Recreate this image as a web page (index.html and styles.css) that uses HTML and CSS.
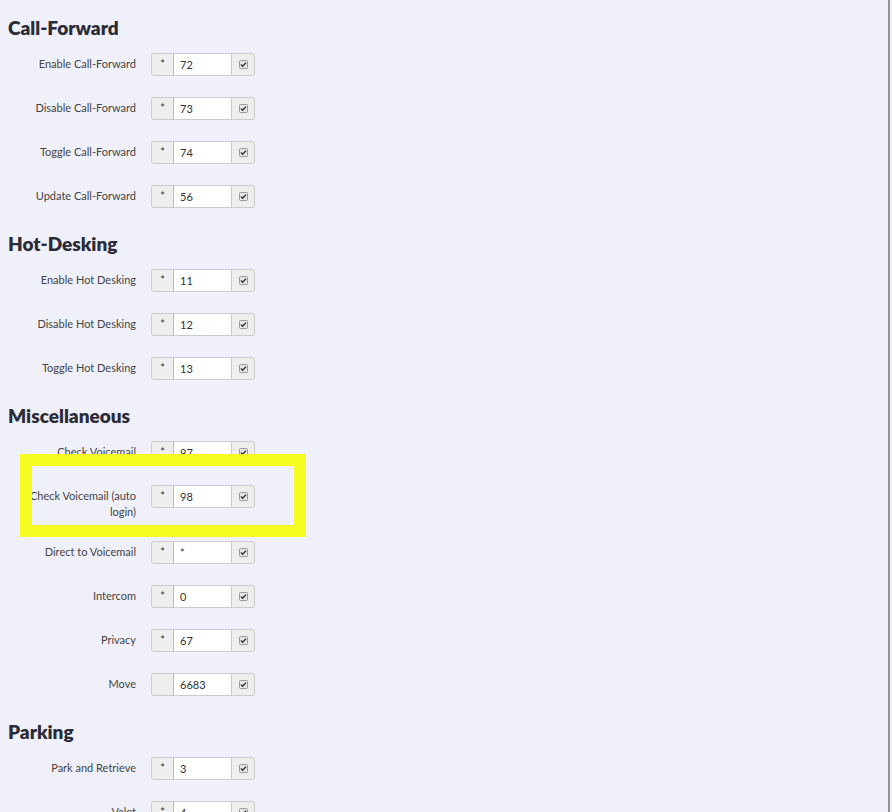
FILE: index.html
```html
<!DOCTYPE html>
<html lang="en">
<head>
    <meta charset="UTF-8">
    <meta name="viewport" content="width=device-width, initial-scale=1.0">
    <title>Feature Codes</title>
    <link rel="stylesheet" href="styles.css">
</head>
<body>

    <div class="page">
        <h2>Call-Forward</h2>
        <div class="row">
            <label>Enable Call-Forward</label>
            <div class="code-group"><span class="prefix">*</span><input type="text" value="72"><span class="check"><svg width="9" height="9" viewBox="0 0 9 9"><rect x="0.5" y="0.5" width="8" height="8" rx="1" fill="#e6e6e6" stroke="#9a9a9a"/><path d="M2 4.6 L3.7 6.3 L7 2.6" fill="none" stroke="#333" stroke-width="1.4"/></svg></span></div>
        </div>
        <div class="row">
            <label>Disable Call-Forward</label>
            <div class="code-group"><span class="prefix">*</span><input type="text" value="73"><span class="check"><svg width="9" height="9" viewBox="0 0 9 9"><rect x="0.5" y="0.5" width="8" height="8" rx="1" fill="#e6e6e6" stroke="#9a9a9a"/><path d="M2 4.6 L3.7 6.3 L7 2.6" fill="none" stroke="#333" stroke-width="1.4"/></svg></span></div>
        </div>
        <div class="row">
            <label>Toggle Call-Forward</label>
            <div class="code-group"><span class="prefix">*</span><input type="text" value="74"><span class="check"><svg width="9" height="9" viewBox="0 0 9 9"><rect x="0.5" y="0.5" width="8" height="8" rx="1" fill="#e6e6e6" stroke="#9a9a9a"/><path d="M2 4.6 L3.7 6.3 L7 2.6" fill="none" stroke="#333" stroke-width="1.4"/></svg></span></div>
        </div>
        <div class="row">
            <label>Update Call-Forward</label>
            <div class="code-group"><span class="prefix">*</span><input type="text" value="56"><span class="check"><svg width="9" height="9" viewBox="0 0 9 9"><rect x="0.5" y="0.5" width="8" height="8" rx="1" fill="#e6e6e6" stroke="#9a9a9a"/><path d="M2 4.6 L3.7 6.3 L7 2.6" fill="none" stroke="#333" stroke-width="1.4"/></svg></span></div>
        </div>

        <h2>Hot-Desking</h2>
        <div class="row">
            <label>Enable Hot Desking</label>
            <div class="code-group"><span class="prefix">*</span><input type="text" value="11"><span class="check"><svg width="9" height="9" viewBox="0 0 9 9"><rect x="0.5" y="0.5" width="8" height="8" rx="1" fill="#e6e6e6" stroke="#9a9a9a"/><path d="M2 4.6 L3.7 6.3 L7 2.6" fill="none" stroke="#333" stroke-width="1.4"/></svg></span></div>
        </div>
        <div class="row">
            <label>Disable Hot Desking</label>
            <div class="code-group"><span class="prefix">*</span><input type="text" value="12"><span class="check"><svg width="9" height="9" viewBox="0 0 9 9"><rect x="0.5" y="0.5" width="8" height="8" rx="1" fill="#e6e6e6" stroke="#9a9a9a"/><path d="M2 4.6 L3.7 6.3 L7 2.6" fill="none" stroke="#333" stroke-width="1.4"/></svg></span></div>
        </div>
        <div class="row">
            <label>Toggle Hot Desking</label>
            <div class="code-group"><span class="prefix">*</span><input type="text" value="13"><span class="check"><svg width="9" height="9" viewBox="0 0 9 9"><rect x="0.5" y="0.5" width="8" height="8" rx="1" fill="#e6e6e6" stroke="#9a9a9a"/><path d="M2 4.6 L3.7 6.3 L7 2.6" fill="none" stroke="#333" stroke-width="1.4"/></svg></span></div>
        </div>

        <h2>Miscellaneous</h2>
        <div class="row">
            <label>Check Voicemail</label>
            <div class="code-group"><span class="prefix">*</span><input type="text" value="97"><span class="check"><svg width="9" height="9" viewBox="0 0 9 9"><rect x="0.5" y="0.5" width="8" height="8" rx="1" fill="#e6e6e6" stroke="#9a9a9a"/><path d="M2 4.6 L3.7 6.3 L7 2.6" fill="none" stroke="#333" stroke-width="1.4"/></svg></span></div>
        </div>
        <div class="row">
            <label>Check Voicemail (auto login)</label>
            <div class="code-group"><span class="prefix">*</span><input type="text" value="98"><span class="check"><svg width="9" height="9" viewBox="0 0 9 9"><rect x="0.5" y="0.5" width="8" height="8" rx="1" fill="#e6e6e6" stroke="#9a9a9a"/><path d="M2 4.6 L3.7 6.3 L7 2.6" fill="none" stroke="#333" stroke-width="1.4"/></svg></span></div>
        </div>
        <div class="row">
            <label>Direct to Voicemail</label>
            <div class="code-group"><span class="prefix">*</span><input type="text" value="*"><span class="check"><svg width="9" height="9" viewBox="0 0 9 9"><rect x="0.5" y="0.5" width="8" height="8" rx="1" fill="#e6e6e6" stroke="#9a9a9a"/><path d="M2 4.6 L3.7 6.3 L7 2.6" fill="none" stroke="#333" stroke-width="1.4"/></svg></span></div>
        </div>
        <div class="row">
            <label>Intercom</label>
            <div class="code-group"><span class="prefix">*</span><input type="text" value="0"><span class="check"><svg width="9" height="9" viewBox="0 0 9 9"><rect x="0.5" y="0.5" width="8" height="8" rx="1" fill="#e6e6e6" stroke="#9a9a9a"/><path d="M2 4.6 L3.7 6.3 L7 2.6" fill="none" stroke="#333" stroke-width="1.4"/></svg></span></div>
        </div>
        <div class="row">
            <label>Privacy</label>
            <div class="code-group"><span class="prefix">*</span><input type="text" value="67"><span class="check"><svg width="9" height="9" viewBox="0 0 9 9"><rect x="0.5" y="0.5" width="8" height="8" rx="1" fill="#e6e6e6" stroke="#9a9a9a"/><path d="M2 4.6 L3.7 6.3 L7 2.6" fill="none" stroke="#333" stroke-width="1.4"/></svg></span></div>
        </div>
        <div class="row">
            <label>Move</label>
            <div class="code-group"><span class="prefix"></span><input type="text" value="6683"><span class="check"><svg width="9" height="9" viewBox="0 0 9 9"><rect x="0.5" y="0.5" width="8" height="8" rx="1" fill="#e6e6e6" stroke="#9a9a9a"/><path d="M2 4.6 L3.7 6.3 L7 2.6" fill="none" stroke="#333" stroke-width="1.4"/></svg></span></div>
        </div>

        <h2>Parking</h2>
        <div class="row">
            <label>Park and Retrieve</label>
            <div class="code-group"><span class="prefix">*</span><input type="text" value="3"><span class="check"><svg width="9" height="9" viewBox="0 0 9 9"><rect x="0.5" y="0.5" width="8" height="8" rx="1" fill="#e6e6e6" stroke="#9a9a9a"/><path d="M2 4.6 L3.7 6.3 L7 2.6" fill="none" stroke="#333" stroke-width="1.4"/></svg></span></div>
        </div>
        <div class="row">
            <label>Valet</label>
            <div class="code-group"><span class="prefix">*</span><input type="text" value="4"><span class="check"><svg width="9" height="9" viewBox="0 0 9 9"><rect x="0.5" y="0.5" width="8" height="8" rx="1" fill="#e6e6e6" stroke="#9a9a9a"/><path d="M2 4.6 L3.7 6.3 L7 2.6" fill="none" stroke="#333" stroke-width="1.4"/></svg></span></div>
        </div>

        <div class="highlight"></div>
    </div>

</body>
</html>
```

FILE: styles.css
```css
html {
    background-color: #f3f3f6;
}
body {
    font-family: Lato, "Noto Sans", sans-serif;
    margin: 0;
    width: 888px;
    height: 812px;
    overflow: hidden;
    background-color: #eff0f9;
    border-right: 2px solid #8f9399;
}
.page {
    position: relative;
    padding: 16px 8px 0;
}
h2 {
    margin: 24px 0 13px;
    font-size: 19px;
    line-height: 24px;
    font-weight: 800;
    color: #2b2c38;
}
h2:first-child {
    margin-top: 0;
}
.row {
    display: flex;
    align-items: flex-start;
    margin-bottom: 21px;
}
.row label {
    width: 128px;
    padding-top: 3px;
    text-align: right;
    font-size: 11px;
    line-height: 16px;
    color: #444;
}
.code-group {
    display: flex;
    height: 23px;
    margin-left: 15px;
}
.prefix, .check {
    box-sizing: border-box;
    border: 1px solid #ccc;
    background-color: #eee;
    display: flex;
    justify-content: center;
    font-size: 11px;
    color: #333;
}
.prefix {
    width: 23px;
    border-radius: 3px 0 0 3px;
    padding-top: 3px;
    line-height: 14px;
}
.check {
    width: 23px;
    border-radius: 0 3px 3px 0;
    align-items: center;
    border-left: none;
}
.code-group input {
    width: 59px;
    height: 23px;
    box-sizing: border-box;
    margin: 0 0 0 -1px;
    padding: 0 6px;
    border: 1px solid #ccc;
    border-left: 1px solid #bbb;
    border-radius: 0;
    background: #fff;
    font-family: inherit;
    font-size: 11px;
    color: #333;
    outline: none;
}
.highlight {
    position: absolute;
    left: 20px;
    top: 454px;
    width: 262px;
    height: 59px;
    border: 12px solid #f6fb22;
}
```
